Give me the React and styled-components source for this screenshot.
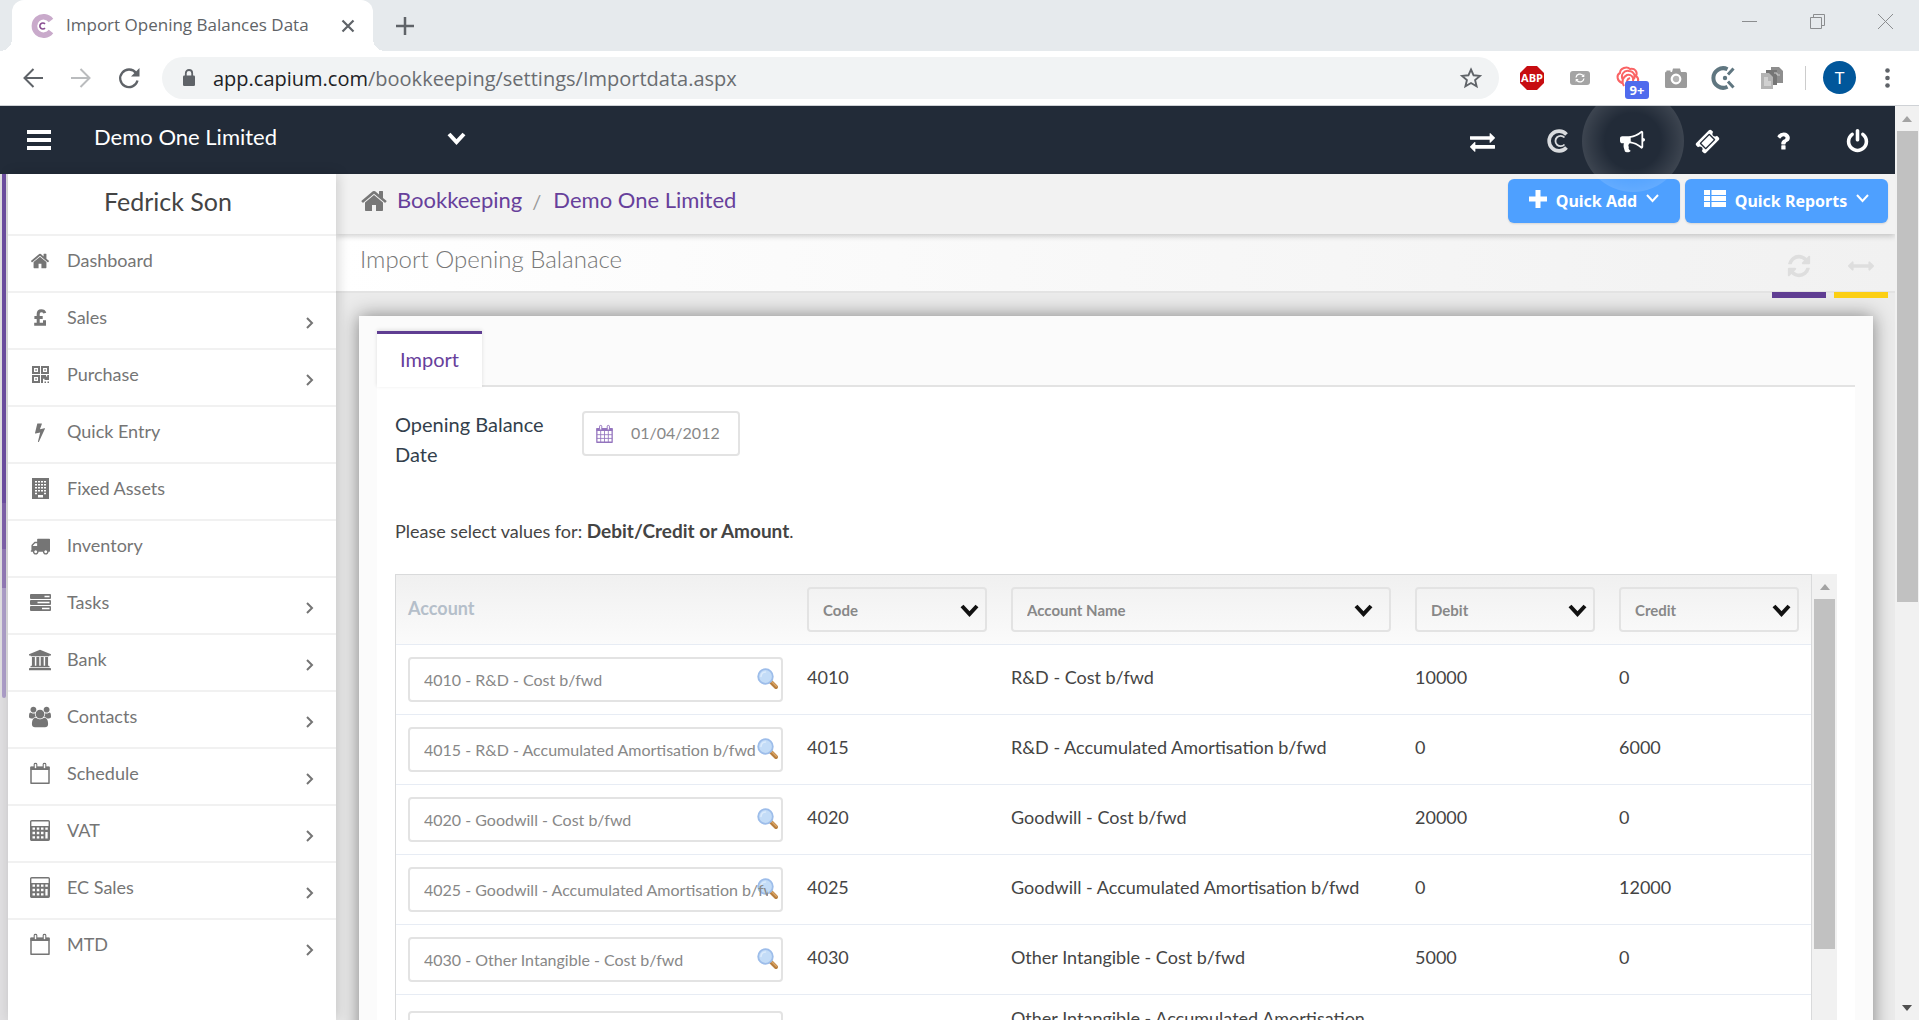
import styled, { createGlobalStyle, css } from "styled-components";

const GlobalStyle = createGlobalStyle`
  * {
    box-sizing: border-box;
  }

  body {
    margin: 0;
    background: #ebebeb;
    font-family: Lato, "Open Sans", sans-serif;
    color: #444;
  }

  button, input, select {
    font-family: inherit;
  }

  button {
    border: none;
    background: none;
    padding: 0;
    cursor: pointer;
  }

  a {
    text-decoration: none;
  }
`

/* ---------- icons ---------- */

const glyphs = {
  home: "M1472 992v480q0 26-19 45t-45 19h-384v-384h-256v384h-384q-26 0-45-19t-19-45v-480q0-1 .5-3t.5-3l575-474 575 474q1 2 1 6zm223-69l-62 74q-8 9-21 11h-3q-13 0-21-7l-692-577-692 577q-12 8-24 7-13-2-21-11l-62-74q-8-10-7-23.5t11-21.5l719-599q32-26 76-26t76 26l244 204v-195q0-14 9-23t23-9h192q14 0 23 9t9 23v408l219 182q10 8 11 21.5t-7 23.5z",
  truck: "M640 1408q0-52-38-90t-90-38-90 38-38 90 38 90 90 38 90-38 38-90zm-384-512h384v-256h-158q-13 0-22 9l-195 195q-9 9-9 22v30zm1280 512q0-52-38-90t-90-38-90 38-38 90 38 90 90 38 90-38 38-90zm256-1088v1024q0 15-4 26.5t-13.5 18.5-16.5 11.5-23.5 6-22.5 2-25.5 0-22.5-.5q0 106-75 181t-181 75-181-75-75-181h-384q0 106-75 181t-181 75-181-75-75-181h-64q-3 0-22.5.5t-25.5 0-22.5-2-23.5-6-16.5-11.5-13.5-18.5-4-26.5q0-26 19-45t45-19v-320q0-8-.5-35t0-38 2.5-34.5 6.5-37 14-30.5 22.5-30l198-198q19-19 50.5-32t58.5-13h160v-192q0-26 19-45t45-19h1024q26 0 45 19t19 45z",
  bolt: "M1333 566q18 20 7 44l-540 1157q-13 25-42 25-4 0-14-2-17-5-25.5-19t-4.5-30l197-808-406 101q-4 1-12 1-18 0-31-11-18-15-13-39l201-825q4-14 16-23t28-9h328q19 0 32 12.5t13 29.5q0 8-5 18l-171 463 396-98q8-2 12-2 19 0 34 15z",
  bullhorn: "M1664 640q53 0 90.5 37.5t37.5 90.5-37.5 90.5-90.5 37.5v384q0 52-38 90t-90 38q-417-347-812-380-58 19-91 66t-31 100.5 40 92.5q-20 33-23 65.5t6 58 33.5 55 48 50 61.5 50.5q-29 58-111.5 83t-168.5 11.5-132-55.5q-7-23-29.5-87.5t-32-94.5-23-89-15-101 3.5-98.5 22-110.5h-122q-66 0-113-47t-47-113v-192q0-66 47-113t113-47h480q435 0 896-384 52 0 90 38t38 90v384zm-128 604v-954q-394 302-768 343v270q377 42 768 341z",
  ticket: "M1024 452l316 316-572 572-316-316zm-211 979l618-618q19-19 19-45t-19-45l-362-362q-18-18-45-18t-45 18l-618 618q-19 19-19 45t19 45l362 362q18 18 45 18t45-18zm889-637l-907 908q-37 37-90.5 37t-90.5-37l-126-126q56-56 56-136t-56-136-136-56-136 56l-125-126q-37-37-37-90.5t37-90.5l907-906q37-37 90.5-37t90.5 37l125 125q-56 56-56 136t56 136 136 56 136-56l126 125q37 37 37 90.5t-37 90.5z",
  exchange: "M1792 1184v192q0 13-9.5 22.5t-22.5 9.5h-1376v192q0 13-9.5 22.5t-22.5 9.5q-12 0-24-10l-319-320q-9-9-9-22 0-14 9-23l320-320q9-9 23-9 13 0 22.5 9.5t9.5 22.5v192h1376q13 0 22.5 9.5t9.5 22.5zm0-544q0 14-9 23l-320 320q-9 9-23 9-13 0-22.5-9.5t-9.5-22.5v-192h-1376q-13 0-22.5-9.5t-9.5-22.5v-192q0-13 9.5-22.5t22.5-9.5h1376v-192q0-14 9-23t23-9q12 0 24 10l319 319q9 9 9 23z",
  question: "M1088 1256v240q0 16-12 28t-28 12h-240q-16 0-28-12t-12-28v-240q0-16 12-28t28-12h240q16 0 28 12t12 28zm316-600q0 54-15.5 101t-35 76.5-55 59.5-57.5 43.5-61 35.5q-41 23-68.5 65t-27.5 67q0 17-12 32.5t-28 15.5h-240q-15 0-25.5-18.5t-10.5-37.5v-45q0-83 65-156.5t143-108.5q59-27 84-56t25-76q0-42-46.5-74t-107.5-32q-65 0-108 29-35 25-107 115-13 16-31 16-12 0-25-8l-164-125q-13-10-15.5-25t5.5-28q160-266 464-266 80 0 161 31t146 83 106 127.5 41 158.5z",
  power: "M1664 896q0 156-61 298t-164 245-245 164-298 61-298-61-245-164-164-245-61-298q0-182 80.5-343t226.5-270q43-32 95.5-25t83.5 50q32 42 24.5 94.5t-49.5 84.5q-98 74-151.5 181t-53.5 228q0 104 40.5 198.5t109.5 163.5 163.5 109.5 198.5 40.5 198.5-40.5 163.5-109.5 109.5-163.5 40.5-198.5q0-121-53.5-228t-151.5-181q-42-32-49.5-84.5t24.5-94.5q31-43 84-50t95 25q146 109 226.5 270t80.5 343zm-640-768v640q0 52-38 90t-90 38-90-38-38-90v-640q0-52 38-90t90-38 90 38 38 90z",
  refresh: "M1639 1056q0 5-1 7-64 268-268 434.5t-478 166.5q-146 0-282.5-55t-243.5-157l-129 129q-19 19-45 19t-45-19-19-45v-448q0-26 19-45t45-19h448q26 0 45 19t19 45-19 45l-137 137q71 66 161 102t187 36q134 0 250-65t186-179q11-17 53-117 8-23 30-23h192q13 0 22.5 9.5t9.5 22.5zm25-800v448q0 26-19 45t-45 19h-448q-26 0-45-19t-19-45 19-45l138-138q-148-137-349-137-134 0-250 65t-186 179q-11 17-53 117-8 23-30 23h-199q-13 0-22.5-9.5t-9.5-22.5v-7q65-268 270-434.5t480-166.5q146 0 284 55.5t245 156.5l130-129q19-19 45-19t45 19 19 45z",
  arrowsH: "M1792 896q0 26-19 45l-256 256q-19 19-45 19t-45-19-19-45v-128h-1024v128q0 26-19 45t-45 19-45-19l-256-256q-19-19-19-45t19-45l256-256q19-19 45-19t45 19 19 45v128h1024v-128q0-26 19-45t45-19 45 19l256 256q19 19 19 45z",
}

const wideGlyphs = {
  bank: "M960 0l960 384v128h-128q0 26-20.5 45t-48.5 19h-1526q-28 0-48.5-19t-20.5-45h-128v-128zm-704 640h256v768h128v-768h256v768h128v-768h256v768h128v-768h256v768h59q28 0 48.5 19t20.5 45v64h-1664v-64q0-26 20.5-45t48.5-19h59v-768zm1595 960q28 0 48.5 19t20.5 45v128h-1920v-128q0-26 20.5-45t48.5-19h1782z",
  users: "M593 896q-162 5-265 128h-134q-82 0-138-40.5t-56-118.5q0-353 124-353 6 0 43.5 21t97.5 42.5 119 21.5q67 0 133-23-5 37-5 66 0 139 81 256zm1071 637q0 120-73 189.5t-194 69.5h-874q-121 0-194-69.5t-73-189.5q0-53 3.5-103.5t14-109 26.5-108.5 43-97.5 62-81 85.5-53.5 111.5-20q10 0 43 21.5t73 48 107 48 135 21.5 135-21.5 107-48 73-48 43-21.5q61 0 111.5 20t85.5 53.5 62 81 43 97.5 26.5 108.5 14 109 3.5 103.5zm-1024-1277q0 106-75 181t-181 75-181-75-75-181 75-181 181-75 181 75 75 181zm704 384q0 159-112.5 271.5t-271.5 112.5-271.5-112.5-112.5-271.5 112.5-271.5 271.5-112.5 271.5 112.5 112.5 271.5zm576 225q0 78-56 118.5t-138 40.5h-134q-103-123-265-128 81-117 81-256 0-29-5-66 66 23 133 23 59 0 119-21.5t97.5-42.5 43.5-21q124 0 124 353zm-128-609q0 106-75 181t-181 75-181-75-75-181 75-181 181-75 181 75 75 181z",
}

const Svg = styled.svg`
  display: block;
  flex: none;
  overflow: visible;
`

function Glyph({ name, size = 20 }) {
  const wide = wideGlyphs[name]
  return (
    <Svg width={size} height={size} viewBox={wide ? "0 0 1920 1792" : "0 0 1792 1792"} fill="currentColor" aria-hidden="true">
      <path d={wide || glyphs[name]} />
    </Svg>
  )
}

function Chevron({ width, height, stroke = 2, cap = "butt" }) {
  return (
    <Svg width={width} height={height} viewBox={`0 0 ${width} ${height}`} fill="none" stroke="currentColor" strokeWidth={stroke} strokeLinecap={cap} aria-hidden="true">
      <path d={`M${stroke / 2} ${stroke / 2}L${width / 2} ${height - stroke / 2 - 1}L${width - stroke / 2} ${stroke / 2}`} />
    </Svg>
  )
}

const PoundIcon = () => (
  <Svg width="12" height="17" viewBox="0 0 12 17" fill="none" stroke="currentColor" strokeWidth="3" aria-hidden="true">
    <path d="M10.8 4.2C10 1.300 4.200.6 4.200 5v9.500M.4 8.500h8.300M.2 15.200H10.500V11.200" />
  </Svg>
)

const QrIcon = () => (
  <Svg width="17" height="17" viewBox="0 0 17 17" fill="currentColor" aria-hidden="true">
    <path fillRule="evenodd" d="M0 0h8v8H0zM2 2v4h4V2zM9 0h8v8H9zM11 2v4h4V2zM0 9h8v8H0zM2 11v4h4v-4z" />
    <path d="M3.300 3.300h1.500v1.500H3.300zM12.300 3.300h1.500v1.500h-1.500zM3.300 12.300h1.500v1.500H3.300zM9 9h5v1.500h1.200V9H17v5h-4.500v-1.300h-1.500V17H9zM12.500 15.500H14V17h-1.500zM15.500 15.500H17V17h-1.500z" />
  </Svg>
)

const BuildingIcon = () => (
  <Svg width="17" height="21" viewBox="0 0 17 21" aria-hidden="true">
    <path d="M0 0h17v21H0z" fill="currentColor" />
    {[3, 6, 9, 12].map((y) => (
      <path key={y} d={`M3 ${y + 0.7}h11`} stroke="#fff" strokeWidth="1.500" strokeDasharray="2 1" />
    ))}
    <path d="M3 15.500h2M12 15.500h2" stroke="#fff" strokeWidth="1.500" />
    <path d="M6 17h5v2.500H6z" fill="#fff" />
  </Svg>
)

const ServerIcon = () => (
  <Svg width="21" height="17" viewBox="0 0 21 17" aria-hidden="true">
    <path d="M1 0h19q1 0 1 1v3q0 1-1 1H1Q0 5 0 4V1q0-1 1-1zM1 6h19q1 0 1 1v3q0 1-1 1H1q-1 0-1-1V7q0-1 1-1zM1 12h19q1 0 1 1v3q0 1-1 1H1q-1 0-1-1v-3q0-1 1-1z" fill="currentColor" />
    <path d="M14.500 2.500h5M7.500 8.500h12M12 14.500h7.500" stroke="#fff" strokeWidth="1.500" />
  </Svg>
)

const CalendarIcon = ({ grid, size = 20 }) => (
  <Svg width={size} height={size + 1} viewBox="0 0 20 21" fill="none" stroke="currentColor" aria-hidden="true">
    <path d="M1 4.500h18v15.700H1z" strokeWidth="1.500" strokeLinejoin="round" />
    <path d="M.5 3.500h19V7H.5z" fill="currentColor" stroke="none" />
    <path d="M4.200 1.200q0-.8 1.300-.8t1.300.8V5q0 .7-1.300.7T4.200 5zM13.200 1.200q0-.8 1.300-.8t1.300.8V5q0 .7-1.300.7T13.200 5z" fill="#fff" strokeWidth="1.100" />
    {grid && <path d="M5.500 7v13M10 7v13M14.500 7v13M1 11.300h18M1 15.700h18" strokeWidth="1" />}
  </Svg>
)

const CalculatorIcon = () => (
  <Svg width="20" height="21" viewBox="0 0 20 21" aria-hidden="true">
    <rect x=".7" y=".7" width="18.600" height="19.600" rx="1" fill="none" stroke="currentColor" strokeWidth="1.400" />
    <path d="M1 6h18v14H1z" fill="currentColor" />
    <path d="M2.500 8.700h2.500M6.800 8.700h2.500M11 8.700h2.500M15.300 8.700h2.500M2.500 13h2.500M6.800 13h2.500M11 13h2.500M2.500 17.300h2.500M6.800 17.300h2.500M11 17.300h2.500" stroke="#fff" strokeWidth="2.300" />
    <path d="M16.500 12v6.500" stroke="#fff" strokeWidth="2.300" />
  </Svg>
)

const MagnifierIcon = () => (
  <Svg width="22" height="22" viewBox="0 0 22 22" fill="none" aria-hidden="true">
    <path d="M13.500 13.500l5.500 5.500" stroke="#b87f3f" strokeWidth="4" strokeLinecap="round" />
    <path d="M14.500 13.500l4.800 4.800" stroke="#dca768" strokeWidth="1.300" strokeLinecap="round" />
    <circle cx="8.500" cy="8.500" r="7.300" fill="#c3dcf7" stroke="#9dbdea" strokeWidth="1.800" />
    <path d="M4 8.500a4.500 4.500 0 0 1 4.500-4.500" stroke="#dcebfb" strokeWidth="1.600" strokeLinecap="round" />
  </Svg>
)

/* ---------- browser frame ---------- */

const Page = styled.div`
  height: 100vh;
  display: flex;
  flex-direction: column;
  overflow: hidden;
`

const TabStrip = styled.div`
  display: flex;
  align-items: center;
  height: 51px;
  flex: none;
  padding-left: 12px;
  background: #e6eaed;
`

const BrowserTab = styled.div`
  position: relative;
  display: flex;
  align-items: center;
  width: 361px;
  height: 51px;
  padding: 0 10px 0 18px;
  background: #fff;
  border-radius: 12px 12px 0 0;
  font: 17px "Open Sans", "Noto Sans", sans-serif;
  color: #606367;

  &::before, &::after {
    content: "";
    position: absolute;
    bottom: 0;
    width: 12px;
    height: 12px;
  }

  &::before {
    left: -12px;
    background: radial-gradient(circle at 0 0, transparent 12px, #fff 12px);
  }

  &::after {
    right: -12px;
    background: radial-gradient(circle at 100% 0, transparent 12px, #fff 12px);
  }
`

const TabTitle = styled.span`
  flex: 1;
  margin-left: 12px;
  padding-bottom: 2px;
  white-space: nowrap;
`

const FrameButton = styled.button`
  display: flex;
  align-items: center;
  justify-content: center;
  flex: none;
  width: ${(props) => props.$width || 48}px;
  height: 42px;
  color: ${(props) => props.$color || "#5f6368"};
`

const WindowButtons = styled.div`
  display: flex;
  margin-left: auto;
  align-self: start;
`

const Toolbar = styled.div`
  display: flex;
  align-items: center;
  height: 55px;
  flex: none;
  padding: 0 8px 1px 9px;
  background: #fff;
  border-bottom: 1px solid #cfd2d6;
`

const AddressBar = styled.div`
  display: flex;
  align-items: center;
  flex: 1;
  height: 42px;
  margin: 0 9px;
  padding-left: 20px;
  background: #f1f3f4;
  border-radius: 21px;
`

const Url = styled.div`
  flex: 1;
  margin-left: 17px;
  padding-top: 2px;
  font: 20px "Open Sans", "Noto Sans", sans-serif;
  color: #6a6d71;
  white-space: nowrap;

  b {
    font-weight: 400;
    color: #202124;
  }
`

const ExtensionBadge = styled.span`
  position: absolute;
  left: 21px;
  top: 24px;
  width: 24px;
  height: 18px;
  border-radius: 3px;
  background: #4f6bed;
  color: #fff;
  font: 700 13px/18px "Open Sans", sans-serif;
`

const ExtensionButton = styled(FrameButton)`
  position: relative;
`

const Divider = styled.span`
  width: 1px;
  height: 24px;
  margin-left: 9px;
  background: #ccc;
`

const Avatar = styled.button`
  width: 33px;
  height: 33px;
  margin: 0 7px 0 17px;
  border-radius: 50%;
  background: #01579b;
  color: #fff;
  font: 17px Roboto, sans-serif;
`

/* ---------- application shell ---------- */

const Viewport = styled.div`
  display: flex;
  flex: 1;
  min-height: 0;
`

const AppArea = styled.div`
  display: flex;
  flex-direction: column;
  flex: 1;
  min-width: 0;
  overflow: hidden;
`

const Scrollbar = styled.div`
  display: flex;
  flex-direction: column;
  align-items: center;
  flex: none;
  width: ${(props) => props.$width}px;
  background: #f1f1f1;
`

const ScrollArrow = styled.span`
  flex: none;
  width: 0;
  height: 0;
  margin: 10px 0 9px;
  border: 5px solid transparent;
  border-top-width: 0;
  border-bottom: 6px solid #a3a3a3;

  ${(props) => props.$down && css`
    margin-top: auto;
    border-top: 6px solid #505050;
    border-bottom-width: 0;
  `}
`

const ScrollThumb = styled.span`
  width: 21px;
  height: ${(props) => props.$size};
  background: #c1c1c1;
`

const AppHeader = styled.header`
  display: flex;
  align-items: center;
  height: 68px;
  flex: none;
  padding-left: 27px;
  background: #222b38;
  color: #fff;
`

const CompanyButton = styled.button`
  display: flex;
  align-items: center;
  justify-content: space-between;
  width: 372px;
  margin-left: 43px;
  padding-bottom: 4px;
  color: #fff;
  font-size: 22px;
  line-height: 28px;

  span {
    padding-bottom: 2px;
  }
`

const HeaderActions = styled.div`
  display: flex;
  margin-left: auto;
`

const HeaderButton = styled.button`
  position: relative;
  display: flex;
  align-items: center;
  justify-content: center;
  width: 75px;
  height: 68px;
  padding-top: 2px;
  color: #fff;

  ${(props) => props.$pulse && css`
    &::after {
      content: "";
      position: absolute;
      z-index: 2;
      left: -13px;
      top: -16px;
      width: 102px;
      height: 102px;
      border-radius: 50%;
      background: radial-gradient(closest-side, transparent 55%, rgba(255, 255, 255, 0.12));
      pointer-events: none;
    }
  `}
`

const Body = styled.div`
  display: flex;
  flex: 1;
  min-height: 0;
`

const Rail = styled.div`
  flex: none;
  width: 8px;
  padding-left: 2px;
  background: #e0dfe1;
`

const RailProgress = styled.div`
  width: 4px;
  height: 524px;
  border-radius: 0 0 2px 2px;
  background: linear-gradient(#6e4fa2 0 329px, #7f62ab 329px 375px, #937ab7 375px 414px, #ae9fca 414px);
`

const Sidebar = styled.nav`
  position: relative;
  z-index: 1;
  flex: none;
  width: 328px;
  background: #fff;
  box-shadow: 2px 0 12px rgba(0, 0, 0, 0.16);
`

const UserName = styled.h2`
  margin: 0;
  height: 60px;
  padding-right: 8px;
  font-size: 25px;
  font-weight: 400;
  line-height: 54px;
  text-align: center;
`

const NavItem = styled.a`
  display: flex;
  align-items: center;
  height: 57px;
  padding: 0 20px 6px 12px;
  border-top: 2px solid #f1f1f1;
  color: #757575;
  font-size: 18px;
`

const NavIcon = styled.span`
  display: flex;
  justify-content: center;
  width: 40px;
  margin-right: 7px;
`

const NavLabel = styled.span`
  padding-bottom: 2px;
`

const NavArrow = styled.span`
  margin: 10px 0 0 auto;
  transform: rotate(-90deg);
`

const Content = styled.main`
  flex: 1;
  min-width: 0;
  background: #ebebeb;
`

const BreadcrumbBar = styled.div`
  position: relative;
  display: flex;
  align-items: start;
  height: 60px;
  padding: 5px 7px 0 24px;
  background: #f2f2f2;
  box-shadow: 0 2px 6px rgba(0, 0, 0, 0.2);
`

const Breadcrumb = styled.div`
  display: flex;
  align-items: center;
  flex: 1;
  height: 43px;
  color: #777;
  font-size: 22px;

  a {
    color: #67409b;
    margin-left: 9px;
    padding-bottom: 2px;
  }

  a + span {
    margin: 0 3px 0 10px;
    color: #999;
    font-size: 20px;
  }
`

const QuickButton = styled.button`
  display: flex;
  align-items: center;
  justify-content: center;
  width: ${(props) => props.$width}px;
  height: 44px;
  margin-left: 5px;
  gap: 9px;
  border-radius: 6px;
  background: #4ea0ff;
  color: #fff;
  font: 700 16px "Noto Sans", sans-serif;
  box-shadow: 0 1px 2px rgba(0, 0, 0, 0.12);

  svg {
    margin-bottom: 5px;
  }
`

const TitleBar = styled.div`
  display: flex;
  height: 59px;
  padding: 0 7px 0 24px;
  background: linear-gradient(90deg, #fff, #f1f1f1);
  border-bottom: 2px solid #e3e3e3;
`

const PageTitle = styled.h1`
  flex: 1;
  margin: 0;
  color: #777;
  font-size: 24px;
  font-weight: 300;
  line-height: 50px;
`

const TitleAction = styled.button`
  display: flex;
  align-items: center;
  justify-content: center;
  width: 54px;
  height: 64px;
  margin-left: 8px;
  padding-top: 6px;
  border-bottom: 6px solid ${(props) => props.$accent};
  color: #dedede;
`

const Panel = styled.section`
  margin: 23px 22px 0 23px;
  padding: 12px 18px 0;
  background: #fbfbfb;
  box-shadow: 0 0 18px rgba(0, 0, 0, 0.45);
`

const TabList = styled.div`
  display: flex;
  height: 59px;
  padding-top: 3px;
  border-bottom: 2px solid #e3e3e3;
`

const TabButton = styled.button`
  width: 105px;
  height: 56px;
  padding-bottom: 4px;
  border-top: 3px solid #5f3d92;
  background: #fff;
  box-shadow: 0 -1px 4px rgba(0, 0, 0, 0.12);
  color: #67409b;
  font-size: 20px;
`

const TabPanel = styled.div`
  padding: 24px 18px 0;
  background: #fff;
`

const DateField = styled.div`
  display: flex;
  align-items: start;
  height: 76px;
`

const DateLabel = styled.label`
  width: 187px;
  padding-right: 27px;
  margin-top: -2px;
  color: #333f4c;
  font-size: 20px;
  line-height: 30px;
`

const InputBox = styled.div`
  display: flex;
  align-items: center;
  width: 158px;
  height: 45px;
  padding-left: 12px;
  border: 2px solid #e3e3e3;
  border-radius: 4px;
  color: #9474be;

  input {
    width: 110px;
    margin-left: 18px;
    padding: 0 0 3px;
    border: none;
    outline: none;
    background: none;
    color: #888;
    font-size: 16px;
  }
`

const Hint = styled.p`
  margin: 32px 0 31px;
  font-size: 18px;
  line-height: 24px;

  b {
    font-size: 19px;
    font-weight: 700;
  }
`

const TableFrame = styled.div`
  display: flex;
`

const Table = styled.table`
  flex: 1;
  width: 100%;
  table-layout: fixed;
  border-collapse: separate;
  border-spacing: 0;
  border: 1px solid #d9dadb;
  font-size: 18px;

  thead tr {
    background: linear-gradient(#f0f0f0, #fbfbfb);
  }

  th, td {
    height: 70px;
    padding: 12px;
    border-bottom: 1px solid #e7ecf4;
    text-align: left;
  }

  td {
    padding: 10px 12px 15px;
    line-height: 26px;
  }

  td:first-child {
    padding: 12px;
  }

  th:first-child {
    padding-bottom: 15px;
    color: #b5bfca;
    font-weight: 700;
  }
`

const Col = styled.col`
  width: ${(props) => props.$width};
`

const FieldWrap = styled.div`
  position: relative;
  isolation: isolate;
  height: 45px;

  svg {
    position: absolute;
    z-index: -1;
    right: ${(props) => props.$inset}px;
    top: ${(props) => props.$top}px;
    color: #111;
  }
`

const field = css`
  width: 100%;
  height: 45px;
  border: 2px solid #e3e3e3;
  border-radius: 4px;
  background: transparent;
  color: #888;
  font-size: 16px;
  outline: none;
`

const AccountInput = styled.input`
  ${field}
  display: block;
  padding: 0 13px 0 14px;
`

const HeaderSelect = styled.select`
  ${field}
  appearance: none;
  padding: 0 40px 0 14px;
  font-size: 15px;
  font-weight: 700;
`

const nav = [
  { label: "Dashboard", icon: <Glyph name="home" /> },
  { label: "Sales", icon: <PoundIcon />, more: true },
  { label: "Purchase", icon: <QrIcon />, more: true },
  { label: "Quick Entry", icon: <Glyph name="bolt" /> },
  { label: "Fixed Assets", icon: <BuildingIcon /> },
  { label: "Inventory", icon: <Glyph name="truck" /> },
  { label: "Tasks", icon: <ServerIcon />, more: true },
  { label: "Bank", icon: <Glyph name="bank" size={22} />, more: true },
  { label: "Contacts", icon: <Glyph name="users" size={22} />, more: true },
  { label: "Schedule", icon: <CalendarIcon />, more: true },
  { label: "VAT", icon: <CalculatorIcon />, more: true },
  { label: "EC Sales", icon: <CalculatorIcon />, more: true },
  { label: "MTD", icon: <CalendarIcon />, more: true },
]

const columns = [
  { label: "Code", inset: 8 },
  { label: "Account Name", inset: 18 },
  { label: "Debit", inset: 8 },
  { label: "Credit", inset: 8 },
]

const rows = [
  ["4010", "R&D - Cost b/fwd", "10000", "0"],
  ["4015", "R&D - Accumulated Amortisation b/fwd", "0", "6000"],
  ["4020", "Goodwill - Cost b/fwd", "20000", "0"],
  ["4025", "Goodwill - Accumulated Amortisation b/fwd", "0", "12000"],
  ["4030", "Other Intangible - Cost b/fwd", "5000", "0"],
  ["4035", "Other Intangible - Accumulated Amortisation b/fwd", "0", "2000"],
]

function BrowserFrame() {
  return (
    <>
      <TabStrip>
        <BrowserTab>
          <Svg width="24" height="24" viewBox="0 0 24 24" fill="none">
            <path d="M21 6.500A9.200 9.200 0 1 0 21 17.500" stroke="#c9aacb" strokeWidth="5.600" />
            <path d="M15 9.900a3 3 0 1 0 0 4.200" stroke="#8a4f93" strokeWidth="1.600" />
          </Svg>
          <TabTitle>Import Opening Balances Data</TabTitle>
          <FrameButton aria-label="Close tab" $width={30}>
            <Svg width="12" height="12" viewBox="0 0 12 12" stroke="currentColor" strokeWidth="2.200">
              <path d="M.5.5l11 11M11.500.5l-11 11" />
            </Svg>
          </FrameButton>
        </BrowserTab>
        <FrameButton aria-label="New tab" $width={64}>
          <Svg width="18" height="18" viewBox="0 0 18 18" stroke="currentColor" strokeWidth="2.500">
            <path d="M9 0v18M0 9h18" />
          </Svg>
        </FrameButton>
        <WindowButtons>
          <FrameButton aria-label="Minimise" $width={68} $color="#8b8d8f">
            <Svg width="15" height="15" viewBox="0 0 15 15" stroke="currentColor">
              <path d="M0 7.500h15" />
            </Svg>
          </FrameButton>
          <FrameButton aria-label="Restore" $width={68} $color="#8b8d8f">
            <Svg width="15" height="15" viewBox="0 0 15 15" fill="none" stroke="currentColor">
              <path d="M.5 3.500h11v11H.5zM3.500 3.500v-3h11v11h-3" />
            </Svg>
          </FrameButton>
          <FrameButton aria-label="Close" $width={68} $color="#8b8d8f">
            <Svg width="15" height="15" viewBox="0 0 15 15" stroke="currentColor">
              <path d="M0 0l15 15M15 0L0 15" />
            </Svg>
          </FrameButton>
        </WindowButtons>
      </TabStrip>

      <Toolbar>
        <FrameButton aria-label="Back">
          <Svg width="20" height="20" viewBox="0 0 20 20" fill="none" stroke="currentColor" strokeWidth="2">
            <path d="M20 10H1.500M10.500 1l-9 9 9 9" />
          </Svg>
        </FrameButton>
        <FrameButton aria-label="Forward" $color="#babcbe">
          <Svg width="20" height="20" viewBox="0 0 20 20" fill="none" stroke="currentColor" strokeWidth="2">
            <path d="M0 10h18.500M9.500 1l9 9-9 9" />
          </Svg>
        </FrameButton>
        <FrameButton aria-label="Reload">
          <Svg width="20" height="20" viewBox="0 0 20 20" fill="none" stroke="currentColor" strokeWidth="2.300">
            <path d="M17 5A8.800 8.800 0 1 0 18.500 12.500" />
            <path d="M20.500 0v8.500H12z" fill="currentColor" stroke="none" />
          </Svg>
        </FrameButton>
        <AddressBar>
          <Svg width="14" height="18" viewBox="0 0 14 18" fill="none">
            <path d="M3.800 8V4.200a3.200 3.200 0 0 1 6.400 0V8" stroke="#5f6368" strokeWidth="1.800" />
            <rect x="1" y="6.500" width="12" height="10.500" rx="1.300" fill="#5f6368" />
          </Svg>
          <Url><b>app.capium.com</b>/bookkeeping/settings/Importdata.aspx</Url>
          <FrameButton aria-label="Bookmark" $width={56}>
            <Svg width="22" height="22" viewBox="0 0 22 22" fill="none" stroke="currentColor" strokeWidth="1.900">
              <path d="M11 2.500l2.600 5.800 6.300.6-4.800 4.200 1.500 6.200L11 16l-5.600 3.300 1.500-6.200L2.100 8.900l6.300-.6z" />
            </Svg>
          </FrameButton>
        </AddressBar>
        <ExtensionButton aria-label="Adblock">
          <Svg width="24" height="24" viewBox="0 0 24 24">
            <path d="M7 0h10l7 7v10l-7 7H7l-7-7V7z" fill="#c70d11" />
            <text x="12" y="16" fill="#fff" fontFamily="Open Sans, sans-serif" fontWeight="700" fontSize="11" textAnchor="middle">ABP</text>
          </Svg>
        </ExtensionButton>
        <ExtensionButton aria-label="Sync">
          <Svg width="20" height="14" viewBox="0 0 20 14" fill="none">
            <rect width="20" height="14" rx="3" fill="#a4a4a4" />
            <path d="M6 6.500a4 4 0 0 1 7-2M14 7.500a4 4 0 0 1-7 2" stroke="#fff" strokeWidth="1.300" />
            <path d="M14.300 3v3h-3zM5.700 11V8h3z" fill="#fff" />
          </Svg>
        </ExtensionButton>
        <ExtensionButton aria-label="Notifications">
          <Svg width="24" height="24" viewBox="0 0 24 24" fill="none" stroke="#fa6364" strokeWidth="2">
            <path d="M6 17C1 15 0 9 4 7 4 2 11 0 14 3c5-1 8 3 6 7 4 3 2 8-2 8M7 14C4 9 8 4 13 5c4 0 7 4 5 8M8 20c-3-5-1-9 3-11 4-1 7 2 6 6M12 19c-2-3-1-6 2-7" />
          </Svg>
          <ExtensionBadge>9+</ExtensionBadge>
        </ExtensionButton>
        <ExtensionButton aria-label="Screenshot">
          <Svg width="22" height="20" viewBox="0 0 22 20">
            <path d="M0 5q0-1.500 1.500-1.500V2.500h4V4h1.500L8 .5h7L16 4h4.500Q22 4 22 5.500v13q0 1.500-1.500 1.500h-19Q0 20 0 18.500z" fill="#9b9b9b" />
            <circle cx="11" cy="11" r="4.300" fill="#b5b5b5" stroke="#fff" strokeWidth="2.200" />
          </Svg>
        </ExtensionButton>
        <ExtensionButton aria-label="Clockify">
          <Svg width="24" height="24" viewBox="0 0 24 24" fill="none" stroke="#5f7680">
            <path d="M15.500 3.200A9.800 9.800 0 1 0 15.500 20.800" strokeWidth="4" />
            <path d="M16 8.500l5.500-6M16 15.500l5.500 6" strokeWidth="3" />
            <circle cx="13" cy="12" r="2.200" fill="#5f7680" stroke="none" />
          </Svg>
        </ExtensionButton>
        <ExtensionButton aria-label="Copy pages">
          <Svg width="22" height="22" viewBox="0 0 22 22">
            <path d="M10 0h8l4 4v12H10z" fill="#8e8e8e" />
            <path d="M5 3h11v15H5z" fill="#767676" />
            <path d="M0 6h8l4 4v12H0z" fill="#b4b4b4" />
            <path d="M3 10h4v4h3v5H3z" fill="#d0d0d0" />
            <path d="M13 6h3v2h3" stroke="#ccc" fill="none" />
          </Svg>
        </ExtensionButton>
        <Divider />
        <Avatar aria-label="Profile">T</Avatar>
        <FrameButton aria-label="Browser menu">
          <Svg width="5" height="20" viewBox="0 0 5 20" fill="currentColor">
            <circle cx="2.500" cy="2.500" r="2.300" />
            <circle cx="2.500" cy="10" r="2.300" />
            <circle cx="2.500" cy="17.500" r="2.300" />
          </Svg>
        </FrameButton>
      </Toolbar>
    </>
  )
}

function Header() {
  return (
    <AppHeader>
      <button aria-label="Toggle menu">
        <Svg width="24" height="20" viewBox="0 0 24 20" fill="#fff">
          <path d="M0 0h24v4H0zM0 8h24v4H0zM0 16h24v4H0z" />
        </Svg>
      </button>
      <CompanyButton>
        <span>Demo One Limited</span>
        <Chevron width={19} height={13} stroke={4} />
      </CompanyButton>
      <HeaderActions>
        <HeaderButton aria-label="Switch"><Glyph name="exchange" size={25} /></HeaderButton>
        <HeaderButton aria-label="Capium">
          <Svg width="22" height="24" viewBox="0 0 22 24" fill="none" stroke="#d9dbde">
            <path d="M19.500 5.500A9.900 9.900 0 1 0 19.500 18.500" strokeWidth="3.600" />
            <path d="M17.500 8.500A5.200 5.200 0 1 0 17.500 15.500" strokeWidth="1.800" />
          </Svg>
        </HeaderButton>
        <HeaderButton aria-label="Announcements" $pulse><Glyph name="bullhorn" size={25} /></HeaderButton>
        <HeaderButton aria-label="Tickets"><Glyph name="ticket" size={25} /></HeaderButton>
        <HeaderButton aria-label="Help"><Glyph name="question" size={24} /></HeaderButton>
        <HeaderButton aria-label="Log out"><Glyph name="power" size={25} /></HeaderButton>
      </HeaderActions>
    </AppHeader>
  )
}

function SideMenu() {
  return (
    <Sidebar>
      <UserName>Fedrick Son</UserName>
      {nav.map((item) => (
        <NavItem href="#" key={item.label}>
          <NavIcon>{item.icon}</NavIcon>
          <NavLabel>{item.label}</NavLabel>
          {item.more && <NavArrow><Chevron width={12} height={8} /></NavArrow>}
        </NavItem>
      ))}
    </Sidebar>
  )
}

function AccountsTable() {
  return (
    <TableFrame>
      <Table>
        <colgroup>
          <Col $width="399px" />
          <Col $width="204px" />
          <Col />
          <Col $width="204px" />
          <Col $width="204px" />
        </colgroup>
        <thead>
          <tr>
            <th>Account</th>
            {columns.map((column) => (
              <th key={column.label}>
                <FieldWrap $inset={column.inset} $top={17}>
                  <Chevron width={19} height={13} stroke={4} />
                  <HeaderSelect aria-label={`${column.label} column`}>
                    <option>{column.label}</option>
                  </HeaderSelect>
                </FieldWrap>
              </th>
            ))}
          </tr>
        </thead>
        <tbody>
          {rows.map(([code, name, debit, credit]) => (
            <tr key={code}>
              <td>
                <FieldWrap $inset={4} $top={11}>
                  <MagnifierIcon />
                  <AccountInput aria-label={`Account ${code}`} defaultValue={`${code} - ${name}`} />
                </FieldWrap>
              </td>
              <td>{code}</td>
              <td>{name}</td>
              <td>{debit}</td>
              <td>{credit}</td>
            </tr>
          ))}
        </tbody>
      </Table>
      <Scrollbar $width={25}>
        <ScrollArrow />
        <ScrollThumb $size="350px" />
      </Scrollbar>
    </TableFrame>
  )
}

export default function App() {
  return (
    <Page>
      <GlobalStyle />
      <BrowserFrame />
      <Viewport>
        <AppArea>
          <Header />
          <Body>
            <Rail><RailProgress /></Rail>
            <SideMenu />
            <Content>
              <BreadcrumbBar>
                <Breadcrumb>
                  <Glyph name="home" size={28} />
                  <a href="#">Bookkeeping</a>
                  <span>/</span>
                  <a href="#">Demo One Limited</a>
                </Breadcrumb>
                <QuickButton $width={172}>
                  <Svg width="18" height="18" viewBox="0 0 18 18" fill="#fff">
                    <path d="M6.500 0h5v6.500H18v5h-6.500V18h-5v-6.500H0v-5h6.500z" />
                  </Svg>
                  Quick Add
                  <Chevron width={13} height={9} />
                </QuickButton>
                <QuickButton $width={203}>
                  <Svg width="22" height="17" viewBox="0 0 22 17" fill="#fff">
                    <path d="M0 0h6v5H0zM7.500 0H22v5H7.500zM0 6h6v5H0zM7.500 6H22v5H7.500zM0 12h6v5H0zM7.500 12H22v5H7.500z" />
                  </Svg>
                  Quick Reports
                  <Chevron width={13} height={9} />
                </QuickButton>
              </BreadcrumbBar>
              <TitleBar>
                <PageTitle>Import Opening Balanace</PageTitle>
                <TitleAction aria-label="Refresh" $accent="#5f3d92"><Glyph name="refresh" size={26} /></TitleAction>
                <TitleAction aria-label="Expand" $accent="#fccf14"><Glyph name="arrowsH" size={26} /></TitleAction>
              </TitleBar>
              <Panel>
                <TabList role="tablist">
                  <TabButton role="tab" aria-selected="true">Import</TabButton>
                </TabList>
                <TabPanel role="tabpanel">
                  <DateField>
                    <DateLabel htmlFor="balance-date">Opening Balance Date</DateLabel>
                    <InputBox>
                      <CalendarIcon grid size={17} />
                      <input id="balance-date" defaultValue="01/04/2012" />
                    </InputBox>
                  </DateField>
                  <Hint>Please select values for: <b>Debit/Credit or Amount</b>.</Hint>
                  <AccountsTable />
                </TabPanel>
              </Panel>
            </Content>
          </Body>
        </AppArea>
        <Scrollbar $width={24}>
          <ScrollArrow />
          <ScrollThumb $size="471px" />
          <ScrollArrow $down />
        </Scrollbar>
      </Viewport>
    </Page>
  )
}
